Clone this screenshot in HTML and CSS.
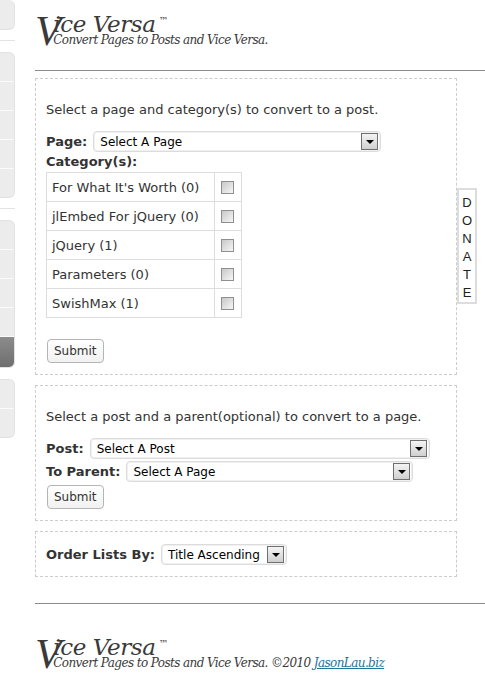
FILE: index.html
```html
<!DOCTYPE html>
<html lang="en">
<head>
    <meta charset="UTF-8">
    <title>Vice Versa</title>
    <link rel="stylesheet" href="styles.css">
</head>
<body>
    <div class="page">
        <!-- admin menu edge -->
        <div class="sidebar">
            <div class="menu menu-first">
                <div class="menu-item"></div>
            </div>
            <div class="menu-sep"></div>
            <div class="menu">
                <div class="menu-item"></div>
                <div class="menu-item"></div>
                <div class="menu-item"></div>
                <div class="menu-item"></div>
                <div class="menu-item"></div>
            </div>
            <div class="menu-sep"></div>
            <div class="menu">
                <div class="menu-item"></div>
                <div class="menu-item"></div>
                <div class="menu-item"></div>
                <div class="menu-item"></div>
                <div class="menu-item current"></div>
            </div>
            <div class="menu menu-last">
                <div class="menu-item"></div>
                <div class="menu-item"></div>
            </div>
        </div>

        <div class="wrap">
            <div class="brand header-brand">
                <span class="brand-v">V</span>
                <div class="brand-text">
                    <div class="brand-name">ice Versa<span class="tm">™</span></div>
                    <div class="brand-tag">Convert Pages to Posts and Vice Versa.</div>
                </div>
            </div>
            <div class="rule"></div>

            <!-- page to post -->
            <div class="panel panel-page">
                <p class="intro">Select a page and category(s) to convert to a post.</p>
                <div class="field">
                    <label>Page:</label>
                    <div class="select select-page"><span>Select A Page</span><span class="arrow"></span></div>
                </div>
                <div class="field-title">Category(s):</div>
                <table class="cats">
                    <tr><td>For What It's Worth (0)</td><td class="check"><input type="checkbox"></td></tr>
                    <tr><td>jlEmbed For jQuery (0)</td><td class="check"><input type="checkbox"></td></tr>
                    <tr><td>jQuery (1)</td><td class="check"><input type="checkbox"></td></tr>
                    <tr><td>Parameters (0)</td><td class="check"><input type="checkbox"></td></tr>
                    <tr><td>SwishMax (1)</td><td class="check"><input type="checkbox"></td></tr>
                </table>
                <button class="button submit-cats">Submit</button>
            </div>

            <!-- post to page -->
            <div class="panel panel-post">
                <p class="intro">Select a post and a parent(optional) to convert to a page.</p>
                <div class="field">
                    <label>Post:</label>
                    <div class="select select-post"><span>Select A Post</span><span class="arrow"></span></div>
                </div>
                <div class="field field-tight">
                    <label>To Parent:</label>
                    <div class="select select-parent"><span>Select A Page</span><span class="arrow"></span></div>
                </div>
                <button class="button">Submit</button>
            </div>

            <!-- ordering -->
            <div class="panel panel-order">
                <div class="field">
                    <label>Order Lists By:</label>
                    <div class="select select-order"><span>Title Ascending</span><span class="arrow"></span></div>
                </div>
            </div>

            <div class="rule footer-rule"></div>
            <div class="brand footer-brand">
                <span class="brand-v">V</span>
                <div class="brand-text">
                    <div class="brand-name">ice Versa<span class="tm">™</span></div>
                    <div class="brand-tag">Convert Pages to Posts and Vice Versa. ©2010 <a href="#">JasonLau.biz</a></div>
                </div>
            </div>
        </div>
    </div>

    <div class="donate">
        <span>D</span><span>O</span><span>N</span><span>A</span><span>T</span><span>E</span>
    </div>
</body>
</html>
```

FILE: styles.css
```css
body {
    margin: 0;
    font-family: "DejaVu Sans", Verdana, sans-serif;
    font-size: 13px;
    color: #333;
    background: #fff;
}
.page {
    display: flex;
    align-items: flex-start;
}

/* left menu stub */
.sidebar {
    width: 15px;
    flex: none;
}
.menu {
    background: #ececec;
    border: 1px solid #e2e2e2;
    border-left: 0;
    border-radius: 0 6px 6px 0;
    overflow: hidden;
    margin-top: 11px;
}
.menu-first {
    margin-top: 0;
    border-top: 0;
}
.menu-item {
    height: 28px;
    border-bottom: 1px solid #fafafa;
}
.menu-item:last-child {
    border-bottom: 0;
}
.menu-first .menu-item {
    height: 29px;
}
.menu-item.current {
    height: 30px;
    background: linear-gradient(#8c8c8c, #6e6e6e);
}
.menu-sep {
    height: 1px;
    background: #e3e3e3;
    margin-top: 10px;
}

.wrap {
    margin-left: 20px;
    flex: 1;
}

/* brand */
.brand {
    display: flex;
    align-items: flex-end;
    font-family: "DejaVu Serif", Georgia, serif;
    font-style: italic;
    color: #3a3a3a;
    padding-left: 0;
}
.header-brand {
    margin-top: 11px;
}
.brand-v {
    font-family: "Liberation Serif", "Times New Roman", serif;
    font-size: 43px;
    line-height: 32px;
    margin-right: -8px;
}
.brand-name {
    font-size: 23px;
    line-height: 20px;
    letter-spacing: -0.4px;
}
.tm {
    font-family: "DejaVu Sans", sans-serif;
    font-style: normal;
    font-size: 10px;
    vertical-align: 8px;
    margin-left: 3px;
}
.brand-tag {
    font-size: 12px;
    line-height: 13px;
    letter-spacing: -0.6px;
}
.brand-tag a {
    color: #21759b;
}
.rule {
    height: 1px;
    background: #8a8a8a;
    margin-top: 23px;
}

/* panels */
.panel {
    width: 405px;
    border: 1px dashed #ccc;
    padding: 0 5px 11px 10px;
    margin-top: 10px;
}
.panel-page {
    margin-top: 7px;
}
.intro {
    margin: 23px 0 0;
    line-height: 16px;
}
.field {
    display: flex;
    align-items: center;
    margin-top: 13px;
}
.field-tight {
    margin-top: 2px;
}
.field label,
.field-title {
    font-weight: bold;
    margin-right: 6px;
}
.field-title {
    line-height: 16px;
    margin-top: 2px;
}
.select {
    display: flex;
    align-items: center;
    justify-content: space-between;
    height: 19px;
    padding: 0 2px 0 6px;
    border: 1px solid #dcdcdc;
    box-shadow: inset 0 0 0 1px #f0f0f0;
    border-radius: 4px;
    font-size: 12px;
    color: #000;
    background: #fff;
}
.arrow {
    width: 15px;
    height: 15px;
    border: 1px solid #6f6f6f;
    background: linear-gradient(#f4f4f4, #cfcfcf);
    position: relative;
}
.arrow::after {
    content: "";
    position: absolute;
    left: 4px;
    top: 6px;
    border-left: 4px solid transparent;
    border-right: 4px solid transparent;
    border-top: 4px solid #000;
}
.select-page { width: 278px; }
.select-post { width: 330px; }
.select-parent { width: 277px; }
.select-order { width: 116px; }

.cats {
    border-collapse: collapse;
    margin-top: 2px;
}
.cats td {
    border: 1px solid #ddd;
    height: 28px;
    padding: 0 5px;
    width: 157px;
}
.cats td.check {
    width: 20px;
    padding: 0 0 0 6px;
}
.cats input {
    appearance: none;
    display: block;
    width: 13px;
    height: 13px;
    margin: 0;
    border: 1px solid #8f8f8f;
    background: linear-gradient(135deg, #c8c8c8, #f6f6f6);
}

.button {
    display: block;
    font-family: "DejaVu Sans", Verdana, sans-serif;
    font-size: 12px;
    color: #333;
    height: 24px;
    padding: 0 6px;
    border: 1px solid #b5b5b5;
    border-radius: 4px;
    background: linear-gradient(#fff, #f1f1f1);
    margin-top: 3px;
    margin-left: 1px;
}
.submit-cats {
    margin-top: 21px;
}
.panel-order {
    padding-top: 1px;
}
.panel-order .field {
    margin-top: 11px;
}

.footer-rule {
    margin-top: 26px;
}
.footer-brand {
    margin-top: 30px;
}

.donate {
    position: absolute;
    left: 457px;
    top: 188px;
    width: 16px;
    padding: 4px 0 0;
    border: 2px solid #ddd;
    background: #fff;
    display: flex;
    flex-direction: column;
    align-items: center;
    font-family: "Liberation Sans", Arial, sans-serif;
    font-size: 13px;
    line-height: 18px;
    color: #222;
}
```
